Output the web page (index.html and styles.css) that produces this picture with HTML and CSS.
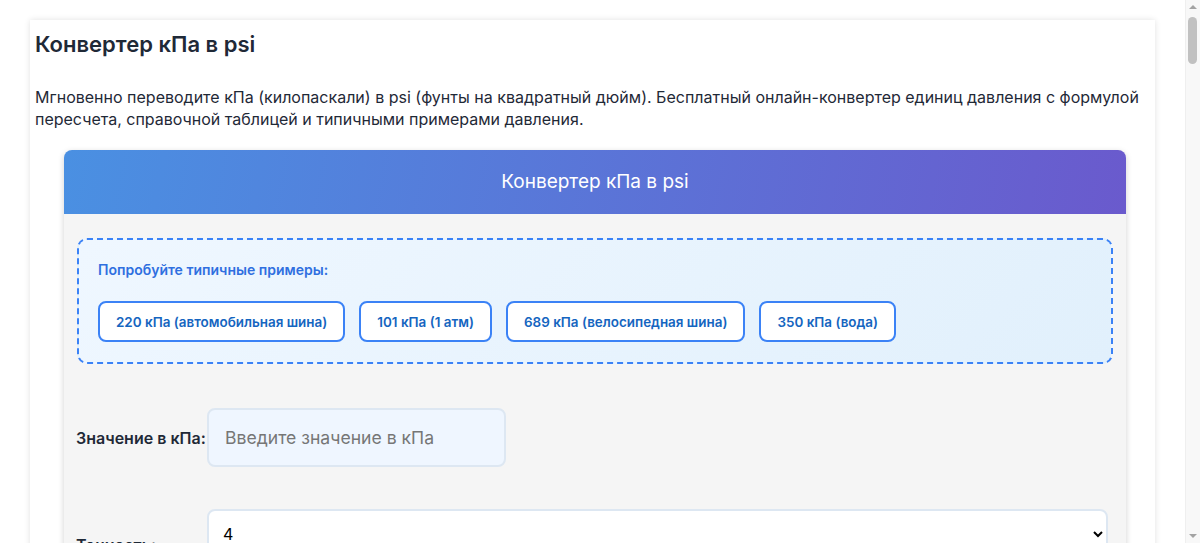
FILE: index.html
```html
<!DOCTYPE html>
<html lang="ru">
<head>
    <meta charset="UTF-8">
    <meta name="viewport" content="width=device-width, initial-scale=1">
    <title>Конвертер кПа в psi</title>
    <link rel="stylesheet" href="styles.css">
</head>
<body>
    <div class="container">
        <h1>Конвертер кПа в psi</h1>
        <p class="intro">Мгновенно переводите кПа (килопаскали) в psi (фунты на квадратный дюйм). Бесплатный онлайн-конвертер единиц давления с формулой пересчета, справочной таблицей и типичными примерами давления.</p>

        <div class="converter">
            <div class="converter-header">Конвертер кПа в psi</div>
            <div class="converter-body">
                <div class="examples">
                    <div class="examples-title">Попробуйте типичные примеры:</div>
                    <div class="example-list">
                        <button class="example-btn">220 кПа (автомобильная шина)</button>
                        <button class="example-btn">101 кПа (1 атм)</button>
                        <button class="example-btn">689 кПа (велосипедная шина)</button>
                        <button class="example-btn">350 кПа (вода)</button>
                    </div>
                </div>

                <div class="form-row">
                    <label for="kpa">Значение в кПа:</label>
                    <input type="text" id="kpa" class="field-input" placeholder="Введите значение в кПа">
                </div>

                <div class="form-row form-row-top">
                    <label for="prec">Точность:</label>
                    <select id="prec" class="field-select">
                        <option>4</option>
                    </select>
                </div>
            </div>
        </div>
    </div>

    <!-- browser scrollbar from the screenshot -->
    <div class="fake-scroll" aria-hidden="true">
        <span class="arrow-up"></span>
        <span class="thumb"></span>
        <span class="arrow-down"></span>
    </div>
</body>
</html>
```

FILE: styles.css
```css
body {
    font-family: Inter, "Noto Sans", sans-serif;
    margin: 0;
    padding: 20px 45px 20px 30px;
    background: #fff;
    color: #2d3748;
}

.container {
    background: white;
    padding: 11px 5px 20px;
    box-shadow: 0 0 6px rgba(0,0,0,0.12);
}

h1 {
    font-size: 22px;
    font-weight: 600;
    line-height: 26px;
    margin: 0;
    color: #1f2937;
}

.intro {
    font-size: 16px;
    line-height: 22px;
    margin: 29px 0 20px;
    color: #1f2937;
}

.converter {
    width: 1062px;
    margin: 0 0 0 29px;
    border-radius: 8px;
    overflow: hidden;
    background: #f5f5f5;
    box-shadow: 0 2px 6px rgba(0,0,0,0.18);
}

.converter-header {
    height: 64px;
    line-height: 64px;
    text-align: center;
    color: #fff;
    font-size: 19px;
    background: linear-gradient(100deg, #4a90e2, #6a5acd);
}

.converter-body {
    padding: 24px 13px 40px 12px;
}

.examples {
    margin-left: 1px;
    border: 2px dashed #3b82f6;
    border-radius: 10px;
    background: linear-gradient(135deg, #eff7ff, #e1f0fc);
    padding: 22px 19px 20px;
}

.examples-title {
    font-size: 14px;
    font-weight: 600;
    color: #2f6fe0;
    line-height: 16px;
}

.example-list {
    display: flex;
    gap: 14px;
    margin-top: 23px;
}

.example-btn {
    font-family: Inter, "Noto Sans", sans-serif;
    height: 41px;
    padding: 0 16px;
    background: #fff;
    border: 2px solid #3b82f6;
    border-radius: 8px;
    color: #1565c0;
    font-size: 13.45px;
    font-weight: 600;
}

.form-row {
    display: flex;
    align-items: center;
    margin-top: 44px;
}

.form-row + .form-row {
    margin-top: 42px;
}

.form-row label {
    width: 131px;
    flex-shrink: 0;
    font-size: 16px;
    font-weight: 600;
    color: #1f2937;
}

.form-row-top {
    align-items: flex-start;
}

.form-row-top label {
    padding-top: 26px;
}

.field-input {
    width: 299px;
    height: 59px;
    box-sizing: border-box;
    padding: 0 16px;
    border: 2px solid #dde7f2;
    border-radius: 8px;
    background: #eff6ff;
    font-family: Inter, "Noto Sans", sans-serif;
    font-size: 17.6px;
    color: #1f2937;
}

.field-input::placeholder {
    color: #767676;
}

.field-select {
    flex: 1;
    margin-right: 5px;
    height: 50px;
    box-sizing: border-box;
    padding: 0 10px;
    border: 2px solid #dde7f2;
    border-radius: 8px;
    background: #fff;
    font-family: Inter, "Noto Sans", sans-serif;
    font-size: 16px;
    color: #000;
}

.fake-scroll {
    position: fixed;
    top: 0;
    right: 0;
    width: 15px;
    height: 100%;
    background: #f8f8f8;
    border-left: 1px solid #efefef;
    box-sizing: border-box;
}

.arrow-up,
.arrow-down {
    position: absolute;
    left: 3px;
    width: 0;
    height: 0;
    border-left: 4px solid transparent;
    border-right: 4px solid transparent;
}

.arrow-up {
    top: 5px;
    border-bottom: 4px solid #a3a3a3;
}

.arrow-down {
    bottom: 5px;
    border-top: 4px solid #a3a3a3;
}

.thumb {
    position: absolute;
    top: 17px;
    left: 2px;
    width: 9px;
    height: 47px;
    border-radius: 5px;
    background: #c1c1c1;
}
```
